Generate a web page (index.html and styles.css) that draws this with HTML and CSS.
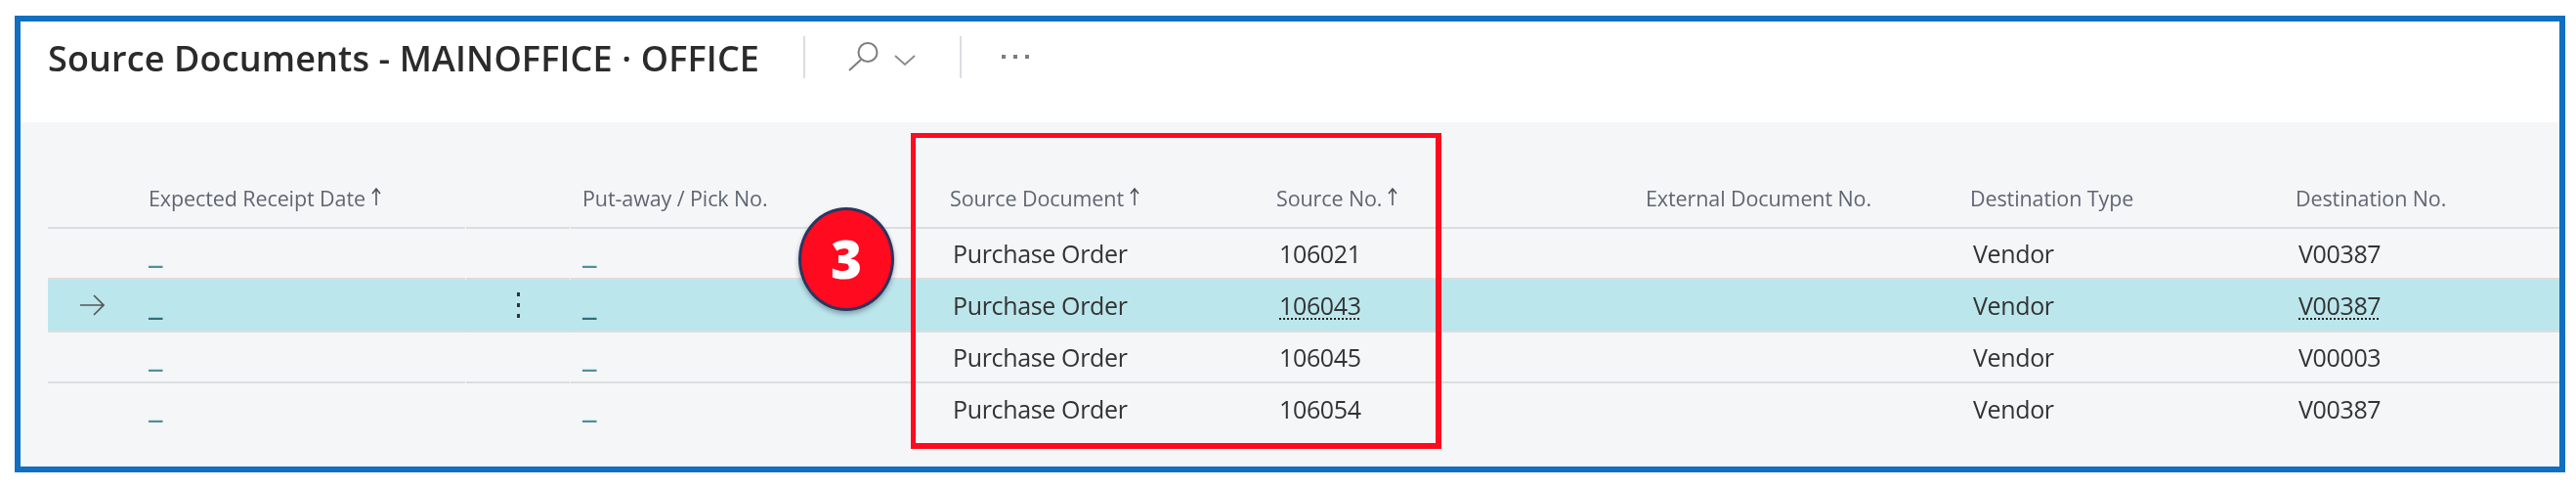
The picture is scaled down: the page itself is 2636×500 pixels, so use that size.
FILE: index.html
```html
<!DOCTYPE html>
<html lang="en">
<head>
<meta charset="utf-8">
<title>Source Documents</title>
<link rel="stylesheet" href="styles.css">
</head>
<body>
<main class="frame">
  <header class="bar">
    <h1 class="title">Source Documents - MAINOFFICE · OFFICE</h1>
    <div class="tool tool-search">
      <svg class="ico-search" viewBox="0 0 32 30" width="32" height="30"><circle cx="21" cy="10.5" r="9.5"/><path d="M14 18 2 29"/></svg>
      <svg class="ico-chev" viewBox="0 0 22 11" width="22" height="11"><path d="M1 1 11 10 21 1"/></svg>
    </div>
    <div class="tool tool-more"><i></i><i></i><i></i></div>
  </header>
  <section class="table">
    <div class="row head">
      <div class="c"></div>
      <div class="c">Expected Receipt Date<svg class="up" viewBox="0 0 10 19" width="10" height="19"><path d="M5 18V1M1 6l4-5 4 5"/></svg></div>
      <div class="c mid"></div>
      <div class="c pick">Put-away / Pick No.</div>
      <div class="c">Source Document<svg class="up" viewBox="0 0 10 19" width="10" height="19"><path d="M5 18V1M1 6l4-5 4 5"/></svg></div>
      <div class="c">Source No.<svg class="up" viewBox="0 0 10 19" width="10" height="19"><path d="M5 18V1M1 6l4-5 4 5"/></svg></div>
      <div class="c">External Document No.</div>
      <div class="c">Destination Type</div>
      <div class="c">Destination No.</div>
    </div>
    <div class="row body">
      <div class="c"></div><div class="c dash">_</div><div class="c mid"></div><div class="c dash pick">_</div>
      <div class="c val">Purchase Order</div><div class="c val">106021</div><div class="c"></div><div class="c val">Vendor</div><div class="c val">V00387</div>
    </div>
    <div class="row body tall selected">
      <div class="c arrow"><svg viewBox="0 0 26 24" width="26" height="24"><path d="M1 12h24M15 2l10 10-10 10"/></svg></div>
      <div class="c dash">_</div>
      <div class="c mid"><span class="kebab"><i></i><i></i><i></i></span></div>
      <div class="c dash pick">_</div>
      <div class="c val">Purchase Order</div><div class="c val"><span class="link">106043</span></div><div class="c"></div><div class="c val">Vendor</div><div class="c val"><span class="link">V00387</span></div>
    </div>
    <div class="row body">
      <div class="c"></div><div class="c dash">_</div><div class="c mid"></div><div class="c dash pick">_</div>
      <div class="c val">Purchase Order</div><div class="c val">106045</div><div class="c"></div><div class="c val">Vendor</div><div class="c val">V00003</div>
    </div>
    <div class="row body last">
      <div class="c"></div><div class="c dash">_</div><div class="c mid"></div><div class="c dash pick">_</div>
      <div class="c val">Purchase Order</div><div class="c val">106054</div><div class="c"></div><div class="c val">Vendor</div><div class="c val">V00387</div>
    </div>
  </section>
  <div class="callout"></div>
  <div class="badge">3</div>
</main>
</body>
</html>
```
FILE: styles.css
```css
* { box-sizing: border-box; }
html, body { margin: 0; background: #fff; }
body { font-family: "Open Sans", "Noto Sans", sans-serif; overflow: hidden; height: 500px; }
.frame {
  position: relative;
  width: 2610px;
  height: 467px;
  margin: 16px 0 0 15px;
  border: 6px solid #0f6fc0;
  display: flex;
  flex-direction: column;
  background: #f5f6f8;
}
.bar {
  height: 103px;
  background: #fff;
  display: flex;
  align-items: flex-start;
  padding-left: 28px;
  filter: blur(.5px);
}
.title {
  margin: 14px 0 0;
  width: 773px;
  font-size: 36px;
  line-height: 48px;
  font-weight: 600;
  letter-spacing: .13px;
  color: #2b2b2b;
  white-space: nowrap;
}
.tool {
  height: 43px;
  margin-top: 15px;
  border-left: 2px solid #dcdce2;
  display: flex;
}
.tool-search { width: 160px; padding: 6px 0 0 43px; gap: 16px; }
.ico-search { fill: none; stroke: #7d7d7d; stroke-width: 2; }
.ico-chev { fill: none; stroke: #8a8a8a; stroke-width: 1.8; margin-top: 13px; }
.tool-more { padding: 19px 0 0 41px; gap: 7px; }
.tool-more i { width: 4px; height: 4px; background: #7d7d7d; margin-right: 1px; }

.table { flex: 1; padding-left: 28px; filter: blur(.5px); }
.row {
  display: grid;
  grid-template-columns: 103px 324px 108px 388px 334px 378px 332px 333px 1fr;
}
.c { border-bottom: 2px solid #dcdde0; display: flex; align-items: center; min-width: 0; white-space: nowrap; }
.mid { margin: 0 1px; justify-content: center; }
.pick { padding-left: 12px; }
.head { height: 109px; }
.head .c { font-size: 21.5px; color: #5f6672; align-items: flex-end; padding-bottom: 14px; letter-spacing: -.1px; line-height: 30px; }
.up { fill: none; stroke: #4a4f58; stroke-width: 1.5; margin: 0 0 7px 6px; }
.body { height: 52px; }
.tall { height: 54px; }
.last .c { border-bottom: 0; }
.val { font-size: 25px; color: #333; padding-left: 3px; letter-spacing: -.35px; }
.dash { font-size: 34px; font-weight: 600; color: #4f8f9b; align-items: flex-start; padding-top: 6px; line-height: 32px; }
.selected { background: #bbe6ec; }
.selected .dash { color: #2f6f7a; padding-top: 7px; }
.arrow { padding-left: 32px; }
.arrow svg { fill: none; stroke: #555; stroke-width: 1.6; }
.kebab { display: flex; flex-direction: column; gap: 7px; }
.kebab i { width: 3px; height: 4px; background: #333; }
.link { text-decoration: underline dotted #222 2px; text-underline-offset: 3px; }

.callout {
  position: absolute;
  left: 911px;
  top: 114px;
  width: 543px;
  height: 323px;
  border: 5px solid #ff0a1e;
  border-width: 5px 6px 6px 5px;
}
.badge {
  position: absolute;
  left: 796px;
  top: 190px;
  width: 98px;
  height: 106px;
  border-radius: 50%;
  background: #ff0a1e;
  border: 3px solid #2b3560;
  box-shadow: 0 3px 5px rgba(60, 70, 90, .45);
  color: #fff;
  font: 800 55px/98px "Open Sans", sans-serif;
  text-align: center;
  filter: blur(.6px);
}
```
